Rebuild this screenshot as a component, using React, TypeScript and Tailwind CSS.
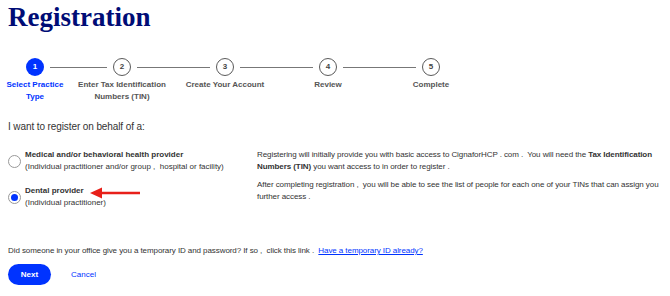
import React from "react";

const steps = [
  { n: 1, label: ["Select Practice", "Type"], w: "w-[70px]" },
  { n: 2, label: ["Enter Tax Identification", "Numbers (TIN)"], w: "w-[104px]" },
  { n: 3, label: ["Create Your Account"], w: "w-[102px]" },
  { n: 4, label: ["Review"], w: "w-[104px]" },
  { n: 5, label: ["Complete"], w: "w-[102px]" },
];

function Circle({ n, active }: { n: number; active?: boolean }) {
  return (
    <div
      className={
        active
          ? "w-[18px] h-[18px] rounded-full bg-[#0033ff] text-white flex items-center justify-center text-[8px] font-bold shrink-0"
          : "w-[18px] h-[18px] rounded-full border-[1.5px] border-[#5a5a5a] text-[#444] flex items-center justify-center text-[8px] font-bold shrink-0"
      }
    >
      {n}
    </div>
  );
}

export default function App() {
  return (
    <div
      className="relative w-[670px] h-[296px] bg-white overflow-hidden pl-2 text-[#333]"
      style={{ fontFamily: '"Liberation Sans", Arial, sans-serif' }}
    >
      <h1
        className="text-[27px] leading-[34px] font-bold text-[#000c76] pt-0"
        style={{ fontFamily: '"Liberation Serif", "DejaVu Serif", serif' }}
      >
        Registration
      </h1>

      {/* stepper circles */}
      <div className="flex items-center mt-[24px] ml-[18px]">
        <Circle n={1} active />
        <div className="h-px bg-[#777] w-[57px] mx-[6px]" />
        <Circle n={2} />
        <div className="h-px bg-[#777] w-[73px] mx-[6px]" />
        <Circle n={3} />
        <div className="h-px bg-[#777] w-[73px] mx-[6px]" />
        <Circle n={4} />
        <div className="h-px bg-[#777] w-[73px] mx-[6px]" />
        <Circle n={5} />
      </div>
      <div className="flex -ml-2 mt-[3px]">
        {steps.map((s) => (
          <div
            key={s.n}
            className={`${s.w} text-center text-[8px] leading-[12px] font-bold whitespace-nowrap ${
              s.n === 1 ? "text-[#0033ff]" : "text-[#555]"
            }`}
          >
            {s.label.map((l) => (
              <div key={l}>{l}</div>
            ))}
          </div>
        ))}
      </div>

      <p className="text-[10px] leading-[14px] text-[#333] mt-[17px] tracking-[-0.1px]">
        I want to register on behalf of a:
      </p>

      <div className="flex mt-[15px]">
        <div className="w-[249px] flex flex-col gap-[12px]">
          <div className="flex items-center gap-[4px]">
            <div className="w-[13px] h-[13px] rounded-full border border-[#999] shrink-0 bg-white" />
            <div className="text-[8px] leading-[12px] text-[#333]">
              <div className="font-bold">Medical and/or behavioral health provider</div>
              <div>(Individual practitioner and/or group ,&nbsp; hospital or facility)</div>
            </div>
          </div>
          <div className="flex items-center gap-[4px]">
            <div className="w-[13px] h-[13px] rounded-full border border-[#999] shrink-0 bg-white flex items-center justify-center">
              <div className="w-[7px] h-[7px] rounded-full bg-[#0033ff]" />
            </div>
            <div className="text-[8px] leading-[12px] text-[#333]">
              <div className="font-bold">Dental provider</div>
              <div>(Individual practitioner)</div>
            </div>
          </div>
        </div>
        <div className="w-[413px] text-[8px] leading-[12px] text-[#333] tracking-[-0.08px]">
          <p>
            Registering will initially provide you with basic access to CignaforHCP . com .&nbsp; You will need the{" "}
            <b>Tax Identification</b> <b>Numbers (TIN)</b> you want access to in order to register .
          </p>
          <p className="mt-[6px]">
            After completing registration ,&nbsp; you will be able to see the list of people for each one of your TINs that
            can assign you further access .
          </p>
        </div>
      </div>

      <p className="text-[8px] leading-[12px] text-[#333] mt-[36px] tracking-[-0.08px]">
        Did someone in your office give you a temporary ID and password? If so ,&nbsp; click this link .&nbsp;{" "}
        <a className="text-[#0033ff] underline">Have a temporary ID already?</a>
      </p>

      <div className="flex items-center mt-[7px]">
        <button className="w-[43px] h-[21px] rounded-full bg-[#0033ff] text-white text-[8px] font-bold">Next</button>
        <button className="ml-[20px] text-[8px] text-[#0033ff]">Cancel</button>
      </div>

      <svg className="absolute left-[88px] top-[186px]" width="56" height="14" viewBox="0 0 56 14">
        <line x1="10" y1="7" x2="52" y2="7" stroke="#e8201a" strokeWidth="2.5" />
        <polygon points="2,7 14,1.5 14,12.5" fill="#e8201a" />
      </svg>
    </div>
  );
}
